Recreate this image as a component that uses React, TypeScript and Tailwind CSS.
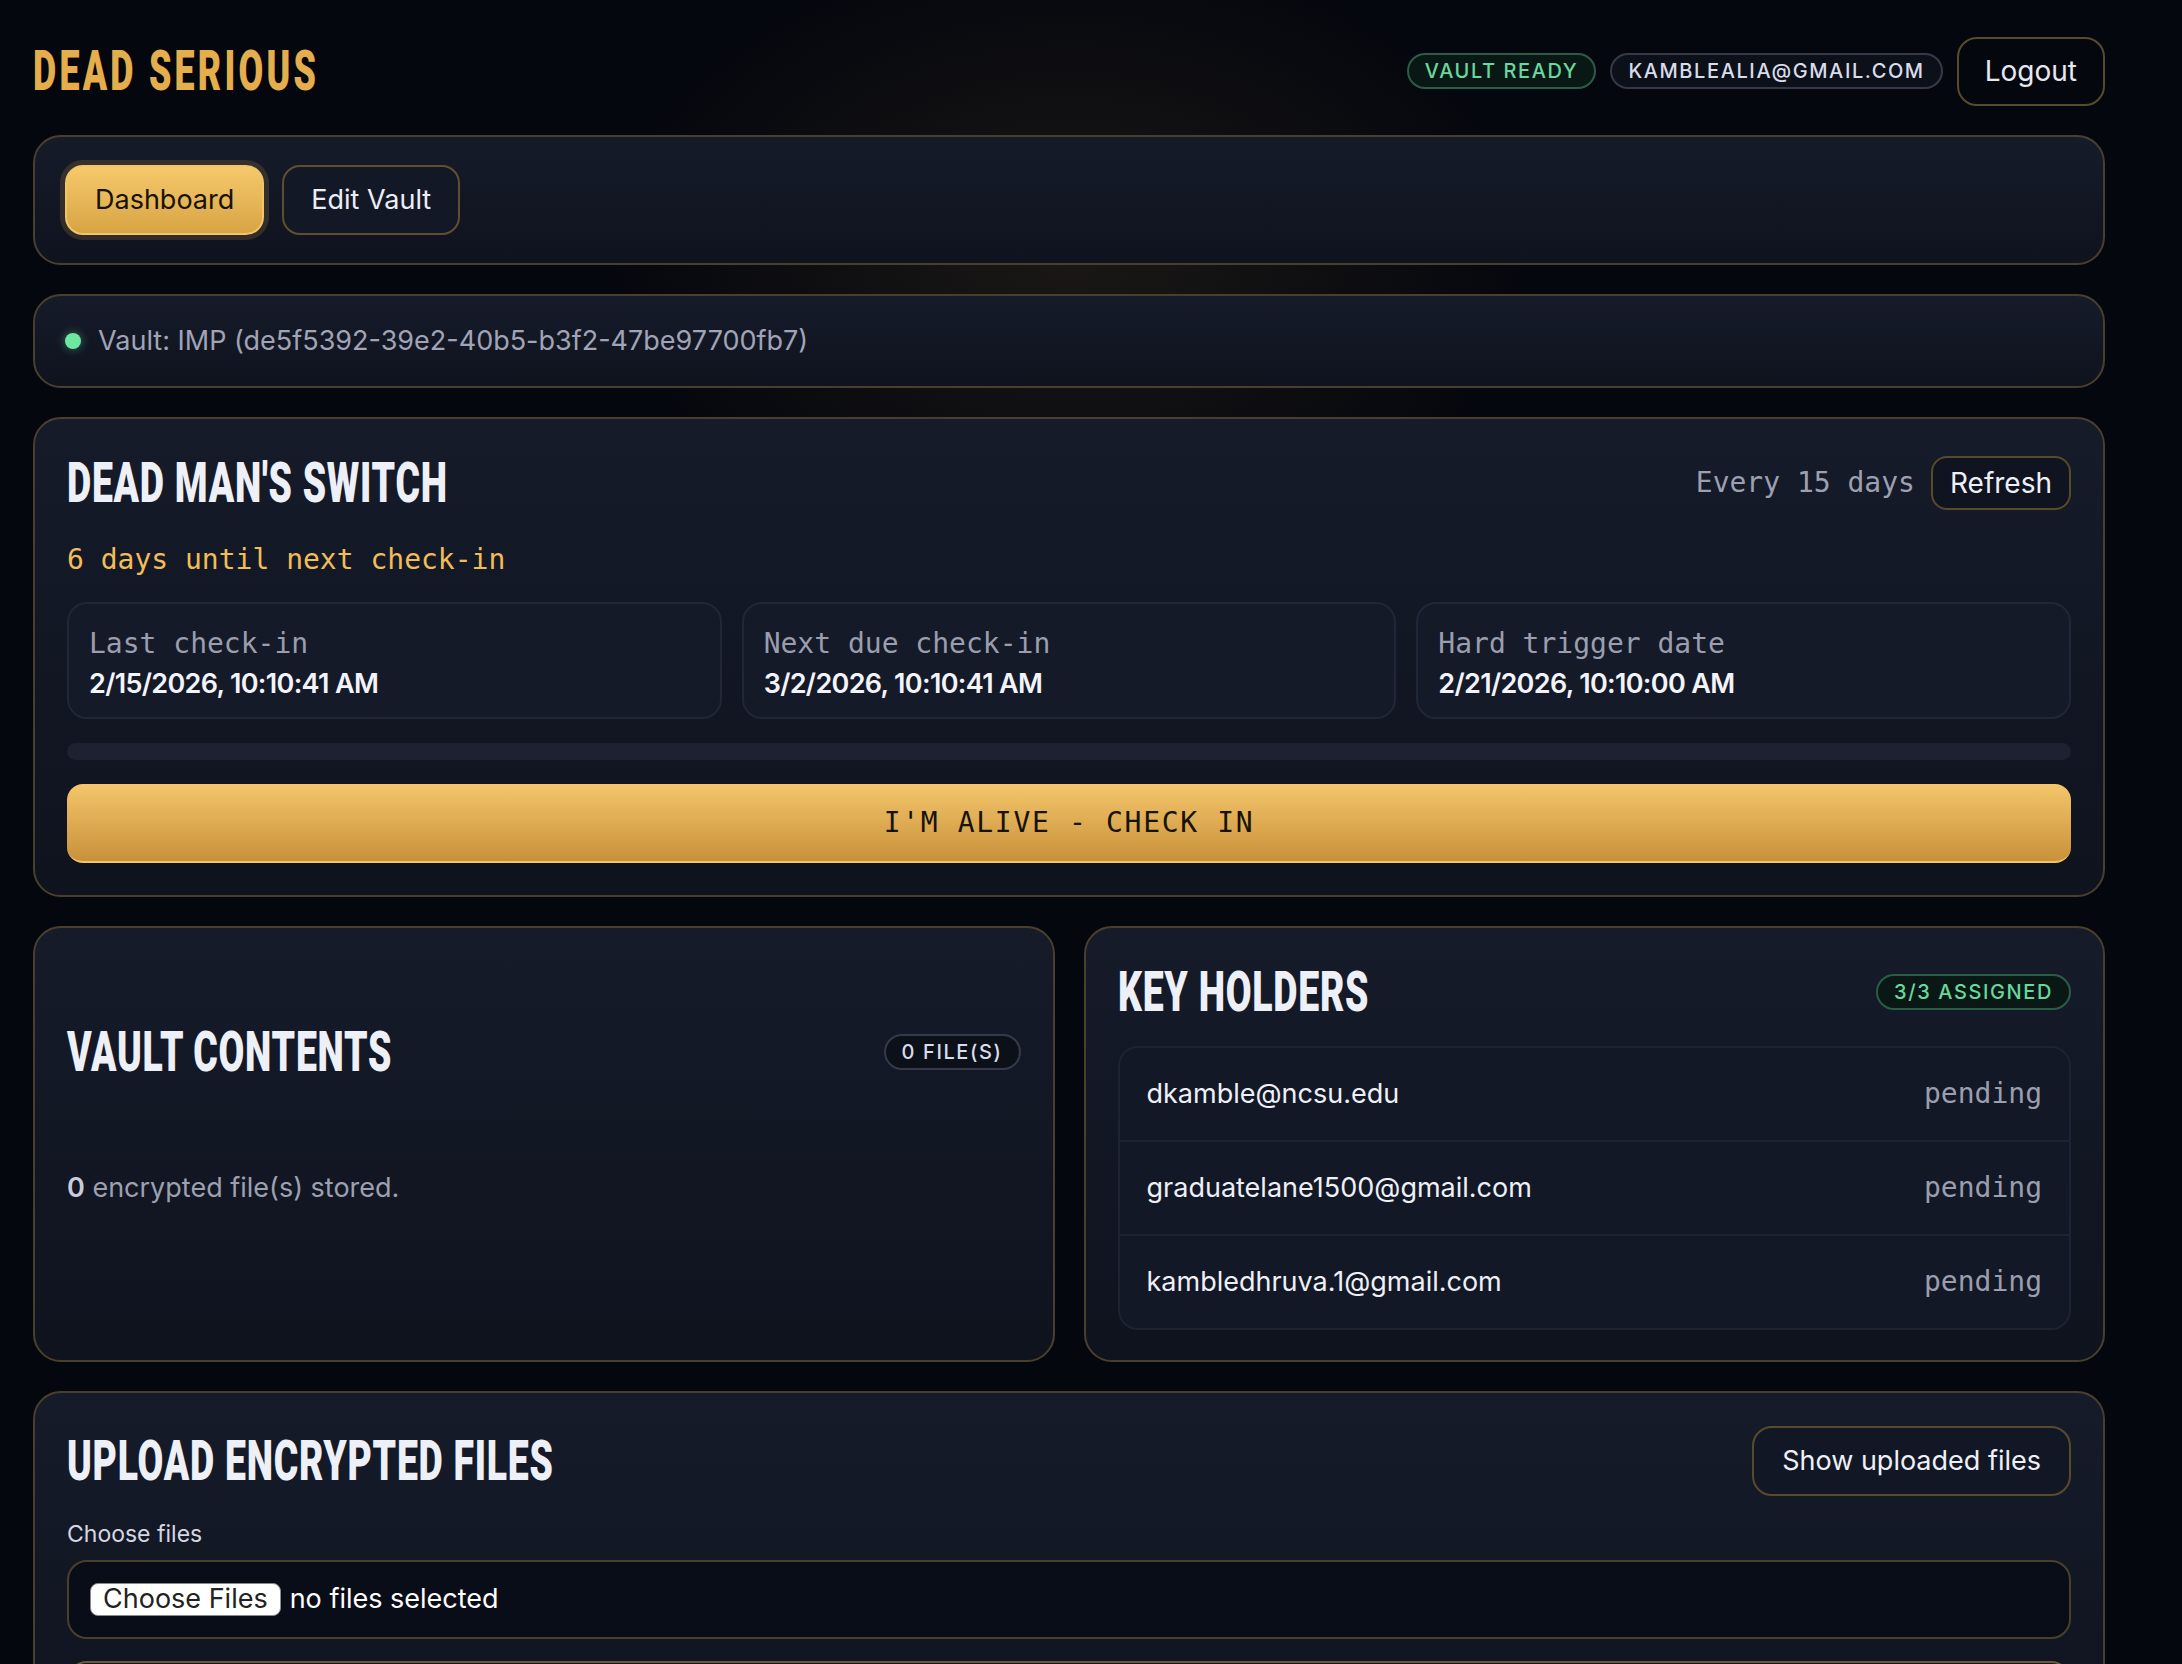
import React from "react";
import clsx from "clsx";

const stats = [
  { label: "Last check-in", value: "2/15/2026, 10:10:41 AM" },
  { label: "Next due check-in", value: "3/2/2026, 10:10:41 AM" },
  { label: "Hard trigger date", value: "2/21/2026, 10:10:00 AM" },
];

const holders = [
  { email: "dkamble@ncsu.edu", status: "pending" },
  { email: "graduatelane1500@gmail.com", status: "pending" },
  { email: "kambledhruva.1@gmail.com", status: "pending" },
];

function Heading({ children }: { children: React.ReactNode }) {
  return (
    <h2 className="origin-left scale-x-[0.68] whitespace-nowrap font-['Roboto',sans-serif] text-[55px] font-black uppercase leading-[64px] tracking-[0.02em] text-[#eef0f7]">
      {children}
    </h2>
  );
}

function Pill({ tone, children }: { tone: "green" | "gray"; children: React.ReactNode }) {
  return (
    <span
      className={clsx(
        "inline-flex h-[36px] items-center rounded-full border-2 px-[16px] text-[20px] font-medium uppercase tracking-[0.08em]",
        tone === "green"
          ? "border-[#2b5c46] bg-[#0a1815] text-[#68d89e]"
          : "border-[#363a48] bg-[#0c1019] text-[#d9dcea]"
      )}
    >
      {children}
    </span>
  );
}

function Card({ className, children }: { className?: string; children: React.ReactNode }) {
  return (
    <section
      className={clsx(
        "rounded-[28px] border-2 border-[#4a3f2c] bg-linear-to-b from-[#161b2a] to-[#0f131e]",
        className
      )}
    >
      {children}
    </section>
  );
}

const mono = "font-['DejaVu_Sans_Mono',monospace]";

export default function App() {
  return (
    <div className="min-h-screen w-full bg-[#05070e] bg-[radial-gradient(ellipse_620px_420px_at_1070px_260px,rgba(212,168,83,0.10),transparent_75%)] pl-[33px] pr-[77px] pt-[36px] pb-[40px] font-['Inter',sans-serif] text-[27px] text-[#e8eaf2]">
      <div className="flex flex-col gap-[29px]">
        {/* Header */}
        <header className="flex h-[70px] items-center justify-between">
          <h1 className="origin-left scale-x-[0.64] whitespace-nowrap font-['Roboto',sans-serif] text-[56px] font-black uppercase leading-[64px] tracking-[0.09em] text-[#e3ae4b]">
            Dead Serious
          </h1>
          <div className="flex items-center gap-[14px]">
            <Pill tone="green">Vault ready</Pill>
            <Pill tone="gray">kamblealia@gmail.com</Pill>
            <button className="h-[69px] rounded-[20px] border-2 border-[#5a4a2c] bg-[#05070e] px-[26px] text-[28px] text-[#e6e8f0]">
              Logout
            </button>
          </div>
        </header>

        {/* Nav */}
        <Card className="flex items-center gap-[18px] px-[30px] py-[28px]">
          <button className="h-[70px] rounded-[18px] border-2 border-[#f3c567] bg-linear-to-b from-[#f6c96c] to-[#d8a443] px-[28px] text-[27px] text-[#17120a] shadow-[0_0_0_5px_rgba(212,168,83,0.17)]">
            Dashboard
          </button>
          <button className="h-[70px] rounded-[18px] border-2 border-[#5f4f30] bg-[#131826] px-[27px] text-[27px] text-[#eceef6]">
            Edit Vault
          </button>
        </Card>

        {/* Vault id */}
        <Card className="flex items-center gap-[17px] px-[30px] py-[30px]">
          <span className="h-[16px] w-[16px] rounded-full bg-[#6ee7a0] shadow-[0_0_10px_rgba(110,231,160,0.45)]" />
          <span className="leading-[30px] text-[#a0a4b6]">Vault: IMP (de5f5392-39e2-40b5-b3f2-47be97700fb7)</span>
        </Card>

        {/* Dead man's switch */}
        <Card className="p-[32px]">
          <div className="flex h-[64px] items-center justify-between">
            <Heading>Dead Man's Switch</Heading>
            <div className="flex items-center gap-[16px]">
              <span className={clsx(mono, "text-[28px] text-[#9ca0b0]")}>Every 15 days</span>
              <button className="h-[54px] rounded-[16px] border-2 border-[#5a4a2c] bg-[#0f1420] px-[17px] text-[28px] text-[#eef0f6]">
                Refresh
              </button>
            </div>
          </div>
          <p className={clsx(mono, "mt-[25px] text-[28px] leading-[40px] text-[#f1bd58]")}>6 days until next check-in</p>
          <div className="mt-[22px] grid grid-cols-3 gap-[20px]">
            {stats.map((s) => (
              <div
                key={s.label}
                className="rounded-[20px] border-2 border-[#222737] bg-[#151a28] px-[20px] pt-[21px] pb-[14px]"
              >
                <div className={clsx(mono, "text-[28px] leading-[38px] text-[#9a9eae]")}>{s.label}</div>
                <div className="mt-[2px] text-[27px] leading-[38px] font-semibold tracking-[-0.025em] text-[#f3f4f9]">{s.value}</div>
              </div>
            ))}
          </div>
          <div className="mt-[24px] h-[17px] rounded-full bg-[#1e2230]" />
          <button
            className={clsx(
              mono,
              "mt-[24px] h-[79px] w-full rounded-[16px] border-b-2 border-[#f2c565] bg-linear-to-b from-[#f4c66a] to-[#c8913a] text-[28px] uppercase tracking-[0.06em] text-[#17120a]"
            )}
          >
            I'M ALIVE - CHECK IN
          </button>
        </Card>

        {/* Contents + key holders */}
        <div className="grid grid-cols-2 gap-[29px]">
          <Card className="grid grid-rows-2 p-[32px]">
            <div className="flex items-center justify-between">
              <Heading>Vault Contents</Heading>
              <Pill tone="gray">0 file(s)</Pill>
            </div>
            <div>
              <p className="mt-[24px] leading-[40px] text-[#9ca0b0]">
                <span className="font-semibold text-[#c9ccd8]">0</span> encrypted file(s) stored.
              </p>
            </div>
          </Card>

          <Card className="px-[32px] pt-[32px] pb-[30px]">
            <div className="flex h-[64px] items-center justify-between">
              <Heading>Key Holders</Heading>
              <Pill tone="green">3/3 assigned</Pill>
            </div>
            <ul className="mt-[22px] divide-y-2 divide-[#1e2331] rounded-[20px] border-2 border-[#1e2331] bg-[#131827]">
              {holders.map((h) => (
                <li key={h.email} className="flex items-center justify-between px-[27px] py-[26px] leading-[40px]">
                  <span className="text-[#eef0f6]">{h.email}</span>
                  <span className={clsx(mono, "text-[28px] text-[#9a9eae]")}>{h.status}</span>
                </li>
              ))}
            </ul>
          </Card>
        </div>

        {/* Upload */}
        <Card className="p-[32px]">
          <div className="flex h-[72px] items-center justify-between">
            <Heading>Upload Encrypted Files</Heading>
            <button className="h-[70px] rounded-[20px] border-2 border-[#5a4a2c] bg-[#121725] px-[28px] text-[27px] text-[#eef0f6]">
              Show uploaded files
            </button>
          </div>
          <label className="mt-[21px] block text-[23px] leading-[32px] text-[#d4d7e2]">Choose files</label>
          <div className="mt-[10px] flex h-[79px] items-center gap-[9px] rounded-[20px] border-2 border-[#4a3f2c] bg-[#090d17] px-[21px]">
            <span className="inline-flex h-[33px] items-center rounded-[8px] border border-[#8a8a8a] bg-white px-[12px] text-[27px] text-[#222]">
              Choose Files
            </span>
            <span className="text-[27px] text-white">no files selected</span>
          </div>
          <div className="mt-[22px] h-[80px] rounded-[20px] border-2 border-[#6b5a34] bg-[#111624]" />
        </Card>
      </div>
    </div>
  );
}
